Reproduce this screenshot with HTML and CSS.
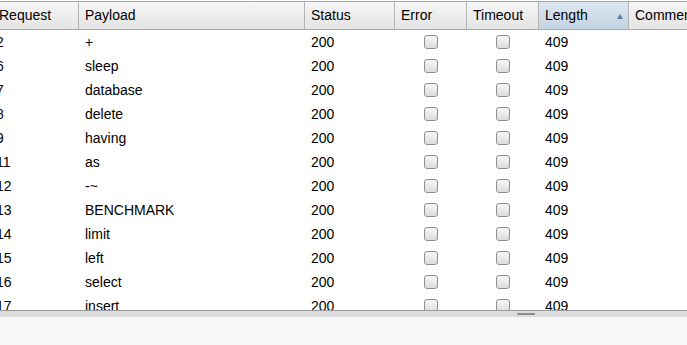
FILE: index.html
```html
<!DOCTYPE html>
<html>

<head>
    <meta charset="UTF-8" />
    <title>Intruder Results</title>
    <link rel="stylesheet" href="styles.css">
</head>

<body>
    <div class="results-pane">
        <table class="results">
            <colgroup>
                <col class="col-request">
                <col class="col-payload">
                <col class="col-status">
                <col class="col-error">
                <col class="col-timeout">
                <col class="col-length">
                <col class="col-comment">
            </colgroup>
            <thead>
                <tr>
                    <th>Request</th>
                    <th>Payload</th>
                    <th>Status</th>
                    <th>Error</th>
                    <th>Timeout</th>
                    <th class="sorted">Length<span class="sort-arrow"></span></th>
                    <th>Comment</th>
                </tr>
            </thead>
            <tbody id="rows"></tbody>
        </table>
    </div>
    <div class="splitter">
        <span class="grip"></span>
    </div>
    <div class="bottom-pane"></div>

    <script>
        const results = [
            [2, '+'],
            [6, 'sleep'],
            [7, 'database'],
            [8, 'delete'],
            [9, 'having'],
            [11, 'as'],
            [12, '-~'],
            [13, 'BENCHMARK'],
            [14, 'limit'],
            [15, 'left'],
            [16, 'select'],
            [17, 'insert']
        ];

        const tbody = document.getElementById('rows');
        results.forEach(r => {
            const tr = document.createElement('tr');
            tr.innerHTML = `<td class="num">${r[0]}</td><td>${r[1]}</td><td>200</td>` +
                `<td class="check"><span class="box"></span></td>` +
                `<td class="check"><span class="box"></span></td>` +
                `<td>409</td><td></td>`;
            tbody.appendChild(tr);
        });
    </script>
</body>

</html>
```
FILE: styles.css
```css
* {
    box-sizing: border-box;
}

body {
    margin: 0;
    background: #f7f7f7;
    font-family: "Liberation Sans", Arial, sans-serif;
    font-size: 14px;
    color: #000;
    overflow: hidden;
}

.results-pane {
    height: 311px;
    padding-top: 1px;
    background: #fff;
    border-bottom: 1px solid #9c9c9c;
    overflow: hidden;
}

.results {
    table-layout: fixed;
    border-collapse: separate;
    border-spacing: 0;
    width: 760px;
    margin-left: -7px;
}

.col-request { width: 86px; }
.col-payload { width: 226px; }
.col-status { width: 90px; }
.col-error { width: 72px; }
.col-timeout { width: 72px; }
.col-length { width: 90px; }
.col-comment { width: 124px; }

.results th {
    height: 29px;
    padding: 0 0 1px 6px;
    text-align: left;
    font-weight: normal;
    white-space: nowrap;
    overflow: hidden;
    background: linear-gradient(#f6f6f6, #e4e4e4);
    border-top: 1px solid #a9a9a9;
    border-bottom: 1px solid #a9a9a9;
    border-right: 1px solid #b4b4b4;
}

.results th.sorted {
    position: relative;
    background: linear-gradient(#dde7f0, #c3d4e4);
}

.sort-arrow {
    position: absolute;
    right: 5px;
    top: 12px;
    width: 0;
    height: 0;
    border-left: 3px solid transparent;
    border-right: 3px solid transparent;
    border-bottom: 5px solid #5a7ea6;
}

.results td {
    height: 24px;
    padding: 0 0 1px 6px;
    white-space: nowrap;
    overflow: hidden;
}

.results td.num {
    padding-left: 3px;
}

.results td.check {
    padding: 0;
    text-align: center;
}

.box {
    display: inline-block;
    width: 14px;
    height: 14px;
    margin-bottom: 2px;
    vertical-align: middle;
    border: 1px solid #8f9090;
    border-radius: 3px;
    background: linear-gradient(#f7f7f7, #dadbdc);
}

.splitter {
    height: 6px;
    background: #dcdcdf;
    padding: 2px 0 0 517px;
}

.grip {
    display: block;
    width: 18px;
    height: 2px;
    border-radius: 1px;
    background: #8d8d8d;
}

.bottom-pane {
    height: 40px;
    background: #f7f7f7;
}
```
